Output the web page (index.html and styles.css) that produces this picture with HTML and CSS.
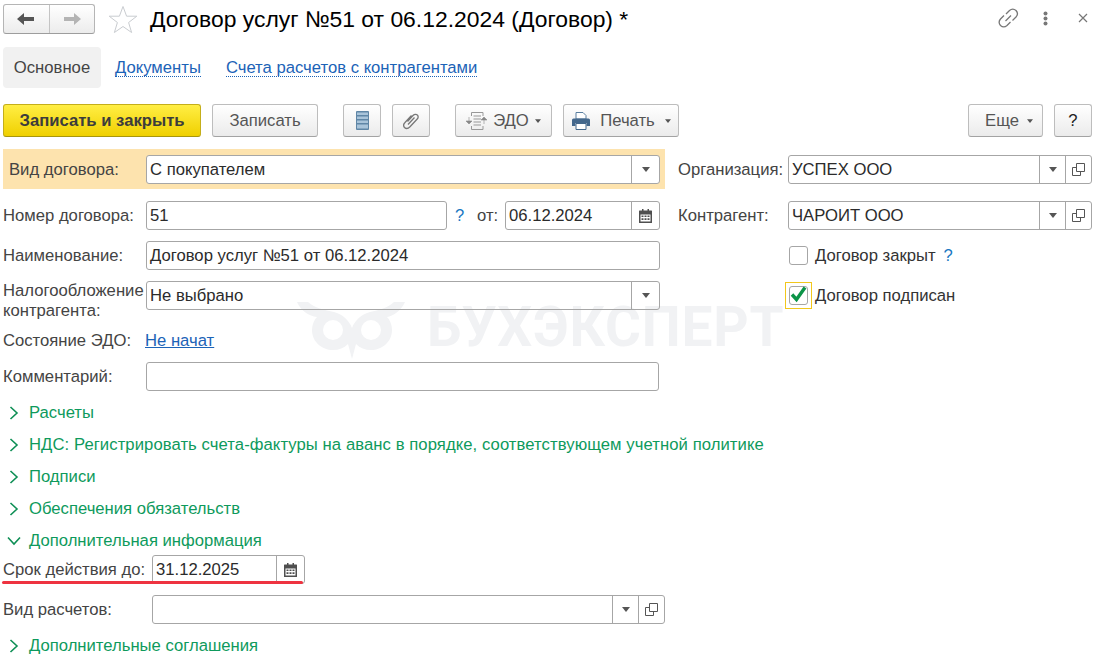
FILE: index.html
```html
<!DOCTYPE html>
<html lang="ru">
<head>
<meta charset="utf-8">
<title>Договор услуг</title>
<link rel="stylesheet" href="styles.css">
</head>
<body>
<svg class="sprite" width="0" height="0" aria-hidden="true">
  <symbol id="tri" viewBox="0 0 8 5"><path d="M0 0H8L4 5Z"/></symbol>
  <symbol id="copy" viewBox="0 0 13 13"><path d="M4.500.5H12.500V8.500H4.500ZM4.500 4.500H.5V12.500H8.500V8.500" fill="none" stroke="#555"/></symbol>
  <symbol id="cal" viewBox="0 0 13 14"><path d="M3 0H4.500V1.500H8.500V0H10V1.500H12.500Q13 1.500 13 2V13.500Q13 14 12.500 14H.5Q0 14 0 13.500V2Q0 1.500 .5 1.500H3Z" fill="#4f4f4f"/><path d="M1.500 5.500H11.500V12.500H1.500Z" fill="#fff"/><path d="M2.500 6.500h2v1.500h-2zM5.500 6.500h2v1.500h-2zM8.500 6.500h2v1.500h-2zM2.500 9.300h2v1.700h-2zM5.500 9.300h2v1.700h-2zM8.500 9.300h2v1.700h-2z" fill="#4f4f4f"/></symbol>
  <symbol id="chev-r" viewBox="0 0 10 14"><path d="M1.500 1L8 7L1.500 13" fill="none" stroke="#0e8f55" stroke-width="1.600"/></symbol>
  <symbol id="chev-d" viewBox="0 0 14 10"><path d="M1 1.500L7 8L13 1.500" fill="none" stroke="#0e8f55" stroke-width="1.600"/></symbol>
</svg>

<div class="watermark">
  <svg class="owl" width="112" height="58" viewBox="0 0 112 58" aria-hidden="true">
    <path fill-rule="evenodd" fill="#f1f2f4" d="M0 0H11C17 6 28 8 37 10C45 12 52 18 55 26C58 18 65 12 73 10C82 8 91 6 97 0H108C104 9 96 14 90 15C93 18 95 23 95 28C95 40 85 48 74 48C68 48 63 46 59 42L55 57L51 42C47 46 42 48 36 48C25 48 15 40 15 28C15 23 17 18 20 15C12 14 4 9 0 0ZM36 18A10 10 0 1 0 36 38A10 10 0 1 0 36 18ZM74 18A10 10 0 1 0 74 38A10 10 0 1 0 74 18Z"/>
  </svg>
  <span class="wm-text">БУХЭКСПЕРТ</span>
</div>

<header class="head">
  <div class="nav-group">
    <button class="nav-btn nav-btn-first" type="button"><svg width="18" height="12" viewBox="0 0 18 12"><path d="M0 6L7 0V4H17V8H7V12Z" fill="#555"/></svg></button>
    <button class="nav-btn" type="button"><svg width="18" height="12" viewBox="0 0 18 12"><path d="M18 6L11 0V4H1V8H11V12Z" fill="#b4b4b4"/></svg></button>
  </div>
  <svg class="star" width="30" height="29" viewBox="0 0 30 29"><path d="M15 1.500L18.600 11.200H28.800L20.600 17.500L23.600 27.500L15 21.500L6.400 27.500L9.400 17.500L1.200 11.200H11.400Z" fill="#fff" stroke="#c9ccd0"/></svg>
  <h1 class="title">Договор услуг №51 от 06.12.2024 (Договор) *</h1>
  <div class="head-tools">
    <svg class="t-link" width="21" height="20" viewBox="0 0 21 20"><g fill="none" stroke="#777" stroke-width="1.300"><path d="M8 6L11.500 2.500C13.500.8 16 .8 18 2.500C19.800 4.500 19.800 7 18 9L14.500 12.500"/><path d="M12.500 14L9 17.500C7 19.200 4.500 19.200 2.500 17.500C.8 15.500.8 13 2.500 11L6 7.500"/><path d="M7.500 13L13 7.500"/></g></svg>
    <svg class="t-dots" width="5" height="15" viewBox="0 0 5 15"><circle cx="2.500" cy="2.500" r="2" fill="#777"/><circle cx="2.500" cy="7.500" r="2" fill="#777"/><circle cx="2.500" cy="12.500" r="2" fill="#777"/></svg>
    <svg class="t-x" width="10" height="10" viewBox="0 0 10 10"><path d="M1 1L9 9M9 1L1 9" stroke="#777" stroke-width="1.200"/></svg>
  </div>
</header>

<nav class="tabs">
  <span class="tab">Основное</span>
  <a class="tab-link tab-link-first">Документы</a>
  <a class="tab-link">Счета расчетов с контрагентами</a>
</nav>

<div class="toolbar">
  <button class="btn btn-primary" type="button">Записать и закрыть</button>
  <button class="btn btn-save" type="button">Записать</button>
  <button class="btn btn-icon btn-sep" type="button"><svg width="13" height="19" viewBox="0 0 13 19"><rect width="13" height="19" rx="1" fill="#5f86a6"/><path d="M1 1.500H12V4H1ZM1 5.500H12V8H1ZM1 9.500H12V12H1ZM1 13.500H12V17.500H1Z" fill="#a9c4da"/></svg></button>
  <button class="btn btn-icon" type="button"><svg width="16" height="18" viewBox="0 0 16 18"><path d="M4.500 9.500L10 3.500C11.500 2 13.500 2 14.500 3.200C15.500 4.500 15.200 6 14 7.300L7 14.800C5 16.800 2.800 16.800 1.500 15.500C.3 14 .5 12 2 10.500L8.500 3.500M5 12.500L11.500 5.500" fill="none" stroke="#777" stroke-width="1.300"/></svg></button>
  <button class="btn btn-sep btn-edo" type="button"><svg width="21" height="18" viewBox="0 0 21 18"><path d="M5.500.5H17V4M5.500.5V4M7.500 4H15M7.500 7H15M7.500 10H15M7.500 13H15M5.500 14V17.500H17V14" fill="none" stroke="#999"/><path d="M3 5V11M0 9H6L3 12ZM18 12V6M15 8H21L18 5Z" fill="#888" stroke="#888" stroke-width=".6"/></svg><span>ЭДО</span><svg class="tri" width="6" height="4"><use href="#tri"/></svg></button>
  <button class="btn btn-print" type="button"><svg width="18" height="18" viewBox="0 0 18 18"><path d="M4 .5H11L14 3.500V7H4Z" fill="#fff" stroke="#5a7fa0"/><path d="M1.500 6.500H16.500Q18 6.500 18 8V14H14.500V11H3.500V14H0V8Q0 6.500 1.500 6.500Z" fill="#44688c"/><path d="M4 11.500H14V17.500H4Z" fill="#fff" stroke="#44688c"/></svg><span>Печать</span><svg class="tri" width="6" height="4"><use href="#tri"/></svg></button>
  <button class="btn btn-more" type="button"><span>Еще</span><svg class="tri" width="6" height="4"><use href="#tri"/></svg></button>
  <button class="btn btn-icon btn-help" type="button">?</button>
</div>

<main class="form">
  <div class="row row-first">
    <div class="cell cell-hl">
      <label class="lab lab-hl">Вид договора:</label>
      <div class="field grow field-white"><span class="val">С покупателем</span><span class="fbtn"><svg width="8" height="5"><use href="#tri"/></svg></span></div>
    </div>
    <div class="cell-r">
      <label class="lab lab-r">Организация:</label>
      <div class="field grow"><span class="val">УСПЕХ ООО</span><span class="fbtn fbtn-s"><svg width="8" height="5"><use href="#tri"/></svg></span><span class="fbtn fbtn-s"><svg width="13" height="13"><use href="#copy"/></svg></span></div>
    </div>
  </div>

  <div class="row">
    <div class="cell">
      <label class="lab">Номер договора:</label>
      <div class="field f-num"><span class="val">51</span></div>
      <span class="hint hint-num">?</span>
      <label class="lab-from">от:</label>
      <div class="field f-date-top"><span class="val">06.12.2024</span><span class="fbtn"><svg width="13" height="14"><use href="#cal"/></svg></span></div>
    </div>
    <div class="cell-r">
      <label class="lab lab-r">Контрагент:</label>
      <div class="field grow"><span class="val">ЧАРОИТ ООО</span><span class="fbtn fbtn-s"><svg width="8" height="5"><use href="#tri"/></svg></span><span class="fbtn fbtn-s"><svg width="13" height="13"><use href="#copy"/></svg></span></div>
    </div>
  </div>

  <div class="row">
    <div class="cell">
      <label class="lab">Наименование:</label>
      <div class="field grow"><span class="val">Договор услуг №51 от 06.12.2024</span></div>
    </div>
    <div class="cell-r cell-chk">
      <span class="chk"></span><span class="chk-text">Договор закрыт</span><span class="hint">?</span>
    </div>
  </div>

  <div class="row row-tax">
    <div class="cell">
      <label class="lab lab-two">Налогообложение контрагента:</label>
      <div class="field grow"><span class="val">Не выбрано</span><span class="fbtn"><svg width="8" height="5"><use href="#tri"/></svg></span></div>
    </div>
    <div class="cell-r cell-chk">
      <span class="chk-focus"><span class="chk"><svg width="19" height="19" viewBox="0 0 19 19"><path d="M3 8.500L7.500 13.500L16 1.500" fill="none" stroke="#0c9448" stroke-width="3.400"/></svg></span></span><span class="chk-text chk-text-on">Договор подписан</span>
    </div>
  </div>

  <div class="row-edo">
    <span class="lab-edo">Состояние ЭДО:</span><a class="edo-link">Не начат</a>
  </div>

  <div class="cell row-comment">
    <label class="lab">Комментарий:</label>
    <div class="field grow"></div>
  </div>

  <div class="groups">
    <div class="group"><svg width="10" height="14"><use href="#chev-r"/></svg><span>Расчеты</span></div>
    <div class="group group-long"><svg width="10" height="14"><use href="#chev-r"/></svg><span>НДС: Регистрировать счета-фактуры на аванс в порядке, соответствующем учетной политике</span></div>
    <div class="group"><svg width="10" height="14"><use href="#chev-r"/></svg><span>Подписи</span></div>
    <div class="group"><svg width="10" height="14"><use href="#chev-r"/></svg><span>Обеспечения обязательств</span></div>
    <div class="group group-open"><svg width="14" height="10"><use href="#chev-d"/></svg><span>Дополнительная информация</span></div>
  </div>

  <div class="extra extra-term">
    <label class="lab lab-x">Срок действия до:</label>
    <div class="field f-term"><span class="val">31.12.2025</span><span class="fbtn"><svg width="13" height="14"><use href="#cal"/></svg></span></div>
    <span class="redline"></span>
  </div>
  <div class="extra extra-last">
    <label class="lab lab-x">Вид расчетов:</label>
    <div class="field f-pay"><span class="val"></span><span class="fbtn fbtn-s"><svg width="8" height="5"><use href="#tri"/></svg></span><span class="fbtn fbtn-s"><svg width="13" height="13"><use href="#copy"/></svg></span></div>
  </div>
  <div class="group"><svg width="10" height="14"><use href="#chev-r"/></svg><span>Дополнительные соглашения</span></div>
</main>
</body>
</html>
```

FILE: styles.css
```css
* { box-sizing: border-box; }
html, body { margin: 0; padding: 0; height: 660px; overflow: hidden; background: #fff; }
body { position: relative; font-family: "Liberation Sans", Arial, sans-serif; font-size: 16.67px; color: #444; }
.sprite { position: absolute; }
button { font-family: inherit; font-size: 16.67px; margin: 0; }

.watermark { position: absolute; left: 297px; top: 302px; display: flex; align-items: flex-start; }
.owl { display: block; }
.wm-text { margin-left: 18px; margin-top: -5px; font-family: Roboto, sans-serif; font-weight: 700; font-size: 55px; line-height: 60px; color: #f1f2f4; letter-spacing: .8px; white-space: nowrap; }

.head { position: relative; height: 40px; padding: 4px 0 0 3px; display: flex; align-items: flex-start; }
.nav-group { display: flex; width: 92px; height: 30px; border: 1px solid #b5b5b5; border-bottom-color: #9d9d9d; border-radius: 3px; background: linear-gradient(#fff, #ececec); overflow: hidden; }
.nav-btn { width: 45px; height: 28px; padding: 0; border: 0; background: none; display: flex; align-items: center; justify-content: center; flex: 1; }
.nav-btn-first { border-right: 1px solid #c4c4c4; flex: 0 0 46px; padding-right: 1px; }
.star { margin: 1px 0 0 13px; flex: none; }
.title { margin: 0 0 0 12px; font-size: 22.9px; line-height: 30px; font-weight: 400; color: #000; white-space: nowrap; }
.head-tools { position: relative; margin-left: auto; width: 97px; height: 30px; }
.t-link { position: absolute; left: 0; top: 4px; }
.t-dots { position: absolute; left: 45px; top: 7px; }
.t-x { position: absolute; left: 80px; top: 9px; }

.tabs { margin: 7px 0 0 3px; height: 41px; display: flex; align-items: center; }
.tab { height: 41px; line-height: 41px; width: 98px; text-align: center; background: #f1f1f1; border-radius: 4px; color: #444; }
.tab-link { margin-left: 25px; color: #1c63b7; border-bottom: 1px dotted #1c63b7; line-height: 17px; }
.tab-link-first { margin-left: 14px; }

.toolbar { margin: 16px 3px 0 3px; height: 33px; display: flex; gap: 11px; }
.btn { height: 33px; padding: 0; border: 1px solid #bdbdbd; border-bottom-color: #a3a3a3; border-radius: 3px; background: linear-gradient(#fff, #ebebeb); color: #555; display: flex; align-items: center; justify-content: center; white-space: nowrap; }
.btn-primary { width: 198px; background: linear-gradient(#ffee44, #f0d000); border-color: #c4ae1a; border-bottom-color: #a8960c; font-weight: 700; color: #3c3c3c; }
.btn-save { width: 106px; }
.btn-icon { width: 38px; }
.btn-sep { margin-left: 14px; }
.btn-edo { width: 97px; gap: 6px; }
.btn-print { width: 116px; gap: 10px; padding-left: 1px; }
.btn-more { width: 75px; margin-left: auto; gap: 8px; padding-left: 7px; }
.btn-help { color: #222; }
.tri { fill: #555; flex: none; }

.form { margin: 18px 3px 0 3px; position: relative; }
.row { display: flex; margin-bottom: 11px; height: 29px; }
.row-first { height: 29px; margin-bottom: 17px; }
.row-tax { height: 40px; margin-bottom: 10px; }
.cell { display: flex; width: 657px; flex: none; align-items: flex-start; }
.cell-hl { position: relative; margin: -6px -5px -5px 0; width: 662px; height: 40px; padding: 6px 5px 5px 6px; background: #fde3ae; }
.cell-r { display: flex; margin-left: 18px; flex: 1; align-items: flex-start; }
.lab { flex: none; width: 143px; line-height: 29px; color: #444; white-space: nowrap; }
.lab-hl { width: 137px; }
.lab-r { width: 110px; }
.lab-two { line-height: 20px; white-space: normal; }
.lab-x { width: 149px; }
.field { position: relative; z-index: 1; height: 29px; display: flex; align-items: stretch; border: 1px solid #a6a6a6; border-radius: 3px; }
.field-white { background: #fff; }
.grow { flex: 1; }
.val { flex: 1; padding-left: 3px; line-height: 27px; color: #2b2b2b; white-space: nowrap; }
.fbtn { flex: none; width: 28px; border-left: 1px solid #a6a6a6; display: flex; align-items: center; justify-content: center; fill: #555; }
.fbtn-s { width: 26px; }
.f-num { width: 301px; flex: none; }
.hint { color: #1a78c2; line-height: 29px; margin-left: 8px; }
.hint-num { margin-left: 8px; width: 22px; flex: none; }
.lab-from { line-height: 29px; width: 28px; flex: none; }
.f-date-top { width: 155px; flex: none; }
.cell-chk { align-items: center; padding-left: 111px; height: 29px; }
.chk { width: 19px; height: 19px; border: 1px solid #a6a6a6; border-radius: 3px; background: #fff; flex: none; display: block; position: relative; }
.chk svg { position: absolute; left: -1px; top: -1px; }
.chk-focus { width: 27px; height: 27px; border: 1px solid #f2c71c; flex: none; margin: 0 -3px 0 -4px; padding: 3px; display: block; }
.chk-text { margin-left: 7px; color: #333; white-space: nowrap; }
.chk-text-on { margin-left: 6px; }

.row-edo { height: 20px; line-height: 20px; display: flex; margin-bottom: 11px; }
.lab-edo { width: 142px; flex: none; }
.edo-link { color: #1c63b7; text-decoration: underline; }
.row-comment { height: 29px; margin-bottom: 6px; }
.row-comment .grow { flex: 0 0 513px; }

.group { height: 32px; display: flex; align-items: center; color: #0e9a5c; white-space: nowrap; }
.group svg { flex: none; margin-left: 6px; margin-right: 10px; }
.group-open svg { margin-left: 4px; margin-right: 8px; }
.group-long { letter-spacing: .07px; }

.extra { position: relative; height: 29px; display: flex; margin-bottom: 11px; }
.extra-term { margin-top: -2px; }
.extra-last { margin-bottom: 6px; }
.f-term { width: 153px; flex: none; }
.f-pay { width: 513px; flex: none; }
.redline { position: absolute; z-index: 2; left: -1px; top: 26px; width: 301px; height: 3px; background: #ee3340; border-radius: 2px; }
```
